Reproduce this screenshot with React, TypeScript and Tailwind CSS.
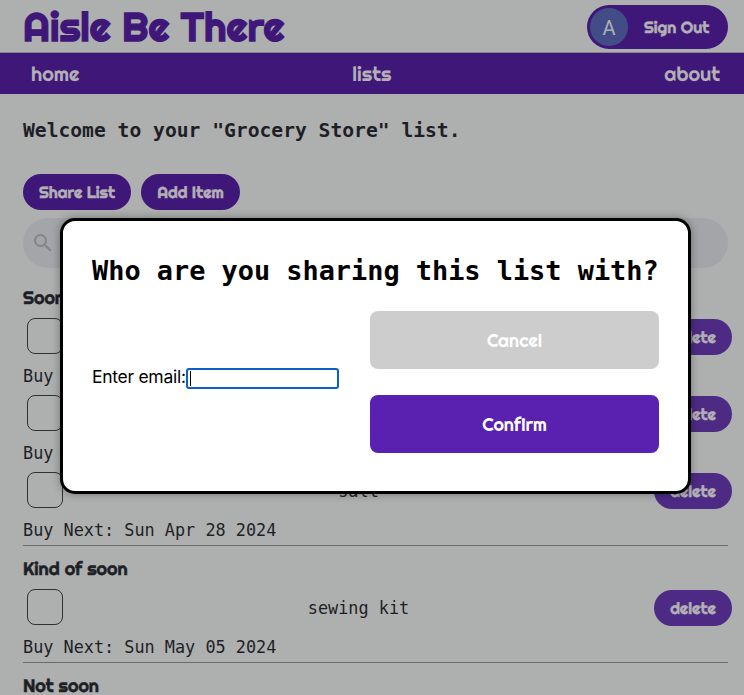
import React from "react";

const display = "font-['Righteous','Lato',sans-serif] [text-rendering:geometricPrecision] [font-variant-ligatures:none]";
const mono = "font-['DejaVu_Sans_Mono',monospace]";
const heavy = "[-webkit-text-stroke:0.5px_currentColor]";

function PillButton({ label, className = "" }: { label: string; className?: string }) {
  return (
    <button className={`${display} ${heavy} h-9 rounded-[18px] bg-[#3f1779] pt-px text-base font-normal whitespace-nowrap text-[#b2afb5] ${className}`}>
      {label}
    </button>
  );
}

function ListItem({ name, date, last = false }: { name: string; date: string; last?: boolean }) {
  return (
    <li className={`flex h-[77px] flex-col ${last ? "border-b border-[#6a6d6b]" : ""}`}>
      <div className="-mr-1 flex h-11 items-center justify-between pl-1">
        <span className="-mt-[3px] h-9 w-9 rounded-lg border border-[#303038]" />
        <span className="text-[16.83px] leading-6">{name}</span>
        <PillButton label="delete" className="w-[78px] bg-[#4d2a84]!" />
      </div>
      <p className="mt-[5px] text-[16.83px] leading-6 whitespace-nowrap">Buy Next: {date}</p>
    </li>
  );
}

function SectionTitle({ children }: { children: React.ReactNode }) {
  return (
    <h3 className={`${display} ${heavy} h-10 pt-[11px] text-[18px] leading-6 font-normal whitespace-nowrap`}>{children}</h3>
  );
}

export default function App() {
  return (
    <div className={`${mono} relative h-[695px] w-[744px] overflow-hidden bg-[#aeb0af] text-[#1e1f26]`}>
      <header className="flex h-[53px] items-start justify-between border-b border-[#85878a] pr-4 pl-[23px]">
        <h1 className={`${display} pt-[3px] text-[40px] leading-[50px] font-normal whitespace-nowrap text-[#3f1779] [-webkit-text-stroke:1.3px_currentColor]`}>
          Aisle Be There
        </h1>
        <button className="mt-[5px] flex h-11 w-[141px] items-center rounded-[22px] bg-[#3f1779] pl-[3px]">
          <span className="flex h-[38px] w-[38px] items-center justify-center rounded-full bg-[#424d88] pt-px font-['Roboto',sans-serif] text-xl text-[#afb0b3]">
            A
          </span>
          <span className={`${display} ${heavy} ml-4 pt-px text-base font-normal whitespace-nowrap text-[#b2afb5]`}>Sign Out</span>
        </button>
      </header>
      <nav className={`${display} flex h-[41px] items-center justify-between bg-[#3f1779] pt-0.5 pr-6 pl-[31px] text-xl font-normal text-[#b2afb5]`}>
        <a>home</a>
        <a>lists</a>
        <a>about</a>
      </nav>
      <main className="px-[23px] pr-4">
        <h2 className="h-12 pt-[25px] text-[19.65px] leading-6 font-bold whitespace-nowrap">Welcome to your "Grocery Store" list.</h2>
        <div className="mt-8 flex gap-2.5">
          <PillButton label="Share List" className="w-[108px]" />
          <PillButton label="Add Item" className="w-[99px]" />
        </div>
        <div className="mt-2 flex h-[50px] items-center rounded-[25px] bg-[#a4a5a8] pl-2">
          <svg className="h-6 w-6 fill-[#858587]" viewBox="0 0 24 24">
            <path d="M15.5 14h-.79l-.28-.27A6.47 6.47 0 0 0 16 9.5 6.5 6.5 0 1 0 9.5 16c1.61 0 3.09-.59 4.23-1.57l.27.28v.79l5 4.99L20.49 19l-4.99-5zm-6 0C7.01 14 5 11.99 5 9.5S7.01 5 9.5 5 14 7.01 14 9.5 11.99 14 9.5 14z" />
          </svg>
        </div>
        <section className="pt-[7px]">
          <SectionTitle>Soon</SectionTitle>
          <ul>
            <ListItem name="" date="Sun Apr 28 2024" />
            <ListItem name="" date="Sun Apr 28 2024" />
            <ListItem name="salt" date="Sun Apr 28 2024" last />
          </ul>
          <SectionTitle>Kind of soon</SectionTitle>
          <ul>
            <ListItem name="sewing kit" date="Sun May 05 2024" last />
          </ul>
          <SectionTitle>Not soon</SectionTitle>
        </section>
      </main>

      <div
        role="dialog"
        className="absolute top-[218px] left-[60px] h-[276px] w-[631px] rounded-[15px] border-[3px] border-black bg-white px-[29px] text-black shadow-[0_0_8px_rgba(0,0,0,0.35)]"
      >
        <h2 className="pt-8 text-[26.9px] leading-9 font-bold whitespace-nowrap">Who are you sharing this list with?</h2>
        <form className="mt-[22px] flex h-[142px] items-center justify-between">
          <label className="flex items-center font-['Inter',sans-serif] text-[17.5px] tracking-[-0.28px] whitespace-nowrap">
            <span className="-mt-[9px] w-[94px]">Enter email:</span>
            <span className="-mt-[7px] flex h-[21px] w-[153px] items-center rounded-[3px] border-2 border-[#0a60c8] pl-0.5">
              <span className="h-[15px] w-px bg-black" />
            </span>
          </label>
          <div className={`${display} flex w-[289px] flex-col gap-[26px] text-[18px] font-normal text-white`}>
            <button className="h-[58px] rounded-lg bg-[#cdcdcd]">Cancel</button>
            <button className="h-[58px] rounded-lg bg-[#5a21b0]">Confirm</button>
          </div>
        </form>
      </div>
    </div>
  );
}
